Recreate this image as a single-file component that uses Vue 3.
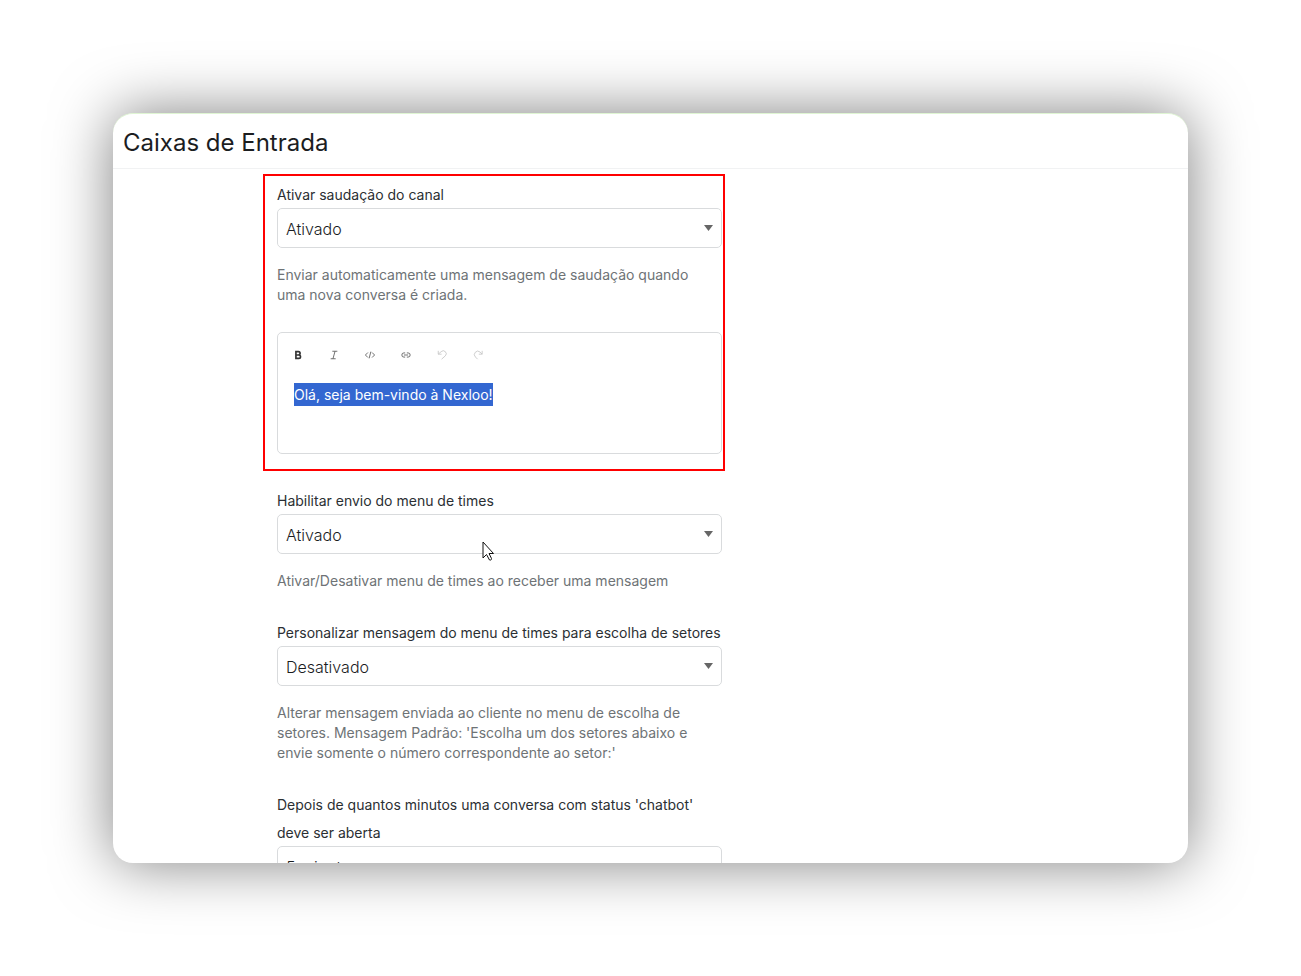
<template>
  <div class="page">
    <main class="window">
      <header class="window-header">
        <h1>Caixas de Entrada</h1>
      </header>

      <form class="settings" @submit.prevent>
        <section class="field highlighted">
          <label for="greeting">Ativar saudação do canal</label>
          <div class="select-box">
            <select id="greeting" v-model="greeting">
              <option v-for="item in states" :key="item">{{ item }}</option>
            </select>
          </div>
          <p class="help">
            Enviar automaticamente uma mensagem de saudação quando uma nova
            conversa é criada.
          </p>

          <div class="editor">
            <div class="toolbar">
              <button
                v-for="tool in tools"
                :key="tool.name"
                type="button"
                class="tool"
                :aria-label="tool.name"
                :disabled="tool.disabled"
              >
                <svg viewBox="0 0 24 24" :class="{ bold: tool.bold }">
                  <path :d="tool.path" />
                </svg>
              </button>
            </div>
            <textarea
              ref="messageBox"
              v-model="message"
              aria-label="Mensagem de saudação"
              spellcheck="false"
            ></textarea>
          </div>
        </section>

        <section v-for="field in fields" :key="field.id" class="field">
          <label :for="field.id">{{ field.label }}</label>
          <div class="select-box">
            <select :id="field.id" v-model="field.value">
              <option v-for="item in field.options" :key="item">
                {{ item }}
              </option>
            </select>
            <svg v-if="field.pointer" class="pointer" viewBox="0 0 13 20">
              <path d="M1 1v16l3.500-3.500 3 5.500c1 .5 2.500-.5 2-1.500l-2.500-5h4.500z" />
            </svg>
          </div>
          <p v-if="field.help" class="help">{{ field.help }}</p>
        </section>
      </form>
    </main>
  </div>
</template>

<script setup>
import { onMounted, ref } from "vue";

const states = ["Ativado", "Desativado"];

const greeting = ref("Ativado");
const message = ref("Olá, seja bem-vindo à Nexloo!");
const messageBox = ref(null);

const tools = [
  {
    name: "Negrito",
    bold: true,
    path: "M7 4h6a4 4 0 0 1 0 8H7zM7 12h7a4 4 0 0 1 0 8H7z",
  },
  { name: "Itálico", path: "M8 3h12M4 21h12M14.500 3l-5 18" },
  { name: "Código", path: "M7 6l-6 6 6 6M17 6l6 6-6 6M14 4l-4 16" },
  {
    name: "Link",
    path: "M10 7H7a5 5 0 0 0 0 10h3M14 7h3a5 5 0 0 1 0 10h-3M7 12h10",
  },
  {
    name: "Desfazer",
    disabled: true,
    path: "M3 2v8h8M3 10l7-6a7 7 0 0 1 10 10l-9 8",
  },
  {
    name: "Refazer",
    disabled: true,
    path: "M22 2v8h-8M22 10l-5-5a8 8 0 1 0-11 12l5 5",
  },
];

const fields = ref([
  {
    id: "team-menu",
    label: "Habilitar envio do menu de times",
    value: "Ativado",
    options: states,
    help: "Ativar/Desativar menu de times ao receber uma mensagem",
    pointer: true,
  },
  {
    id: "team-message",
    label: "Personalizar mensagem do menu de times para escolha de setores",
    value: "Desativado",
    options: states,
    help: "Alterar mensagem enviada ao cliente no menu de escolha de setores. Mensagem Padrão: 'Escolha um dos setores abaixo e envie somente o número correspondente ao setor:'",
  },
  {
    id: "chatbot-time",
    label:
      "Depois de quantos minutos uma conversa com status 'chatbot' deve ser aberta",
    value: "5 minutos",
    options: ["5 minutos", "10 minutos", "30 minutos"],
  },
]);

onMounted(() => {
  messageBox.value.focus({ preventScroll: true });
  messageBox.value.select();
});
</script>

<style>
body {
  margin: 0;
  background: #fff;
}
</style>

<style scoped>
* {
  box-sizing: border-box;
}

.page {
  height: 100vh;
  padding: 113px;
  font-family: Inter, "Liberation Sans", sans-serif;
  color: #2b2f33;
}

.window {
  height: 100%;
  overflow: hidden;
  background: #fff;
  border-top: 1px solid #dff5d3;
  border-radius: 20px;
  box-shadow: 0 0 60px rgba(0, 0, 0, 0.5);
}

.window-header {
  padding: 9px 10px 5px;
  border-bottom: 1px solid #f1f2f3;
}

h1 {
  margin: 0;
  font-size: 24px;
  font-weight: 400;
  line-height: 40px;
  color: #1b1d1f;
}

.settings {
  display: grid;
  grid-template-columns: 150px minmax(0, 462px) 1fr;
  padding-top: 5px;
}

.field {
  grid-column: 2;
  padding: 0 3px 27px 14px;
}

.highlighted {
  margin-bottom: 15px;
  padding: 4px 1px 15px 12px;
  border: 2px solid #f00;
}

label {
  display: block;
  margin: 1px 0 -1px;
  font-size: 14px;
  line-height: 28px;
}

.select-box {
  position: relative;
}

.select-box::after {
  content: "";
  position: absolute;
  top: 17px;
  right: 9px;
  width: 9px;
  height: 6px;
  background: #666;
  clip-path: polygon(0 0, 100% 0, 50% 100%);
  pointer-events: none;
}

select {
  display: block;
  width: 100%;
  height: 40px;
  padding: 1px 24px 0 8px;
  appearance: none;
  font-family: inherit;
  font-size: 16px;
  font-weight: 300;
  color: #1b1d1f;
  background: #fff;
  border: 1px solid #d9dbdd;
  border-radius: 5px;
}

.help {
  margin: 17px 0 0;
  padding-right: 16px;
  font-size: 14px;
  line-height: 20px;
  color: #6e7376;
}

.editor {
  margin-top: 27px;
  height: 122px;
  padding: 10px 16px;
  border: 1px solid #d9dbdd;
  border-radius: 5px;
}

.toolbar {
  display: flex;
  gap: 12px;
  margin-left: -8px;
}

.tool {
  display: grid;
  place-items: center;
  width: 24px;
  height: 24px;
  padding: 0;
  border: 0;
  background: none;
  color: #555;
}

.tool:disabled {
  color: #c4c4c4;
}

.tool svg {
  width: 10px;
  height: 10px;
  fill: none;
  stroke: currentColor;
  stroke-width: 2;
}

.tool svg.bold {
  stroke-width: 4;
  color: #333;
}

textarea {
  display: block;
  width: 100%;
  height: 48px;
  margin-top: 16px;
  padding: 0;
  resize: none;
  border: 0;
  outline: 0;
  font-family: inherit;
  font-size: 14px;
  line-height: 23px;
  color: #2b2f33;
}

textarea::selection {
  color: #fff;
  background: #3367d1;
}

.pointer {
  position: absolute;
  top: 27px;
  left: 205px;
  width: 13px;
  height: 20px;
  fill: #fff;
  stroke: #111;
}
</style>
